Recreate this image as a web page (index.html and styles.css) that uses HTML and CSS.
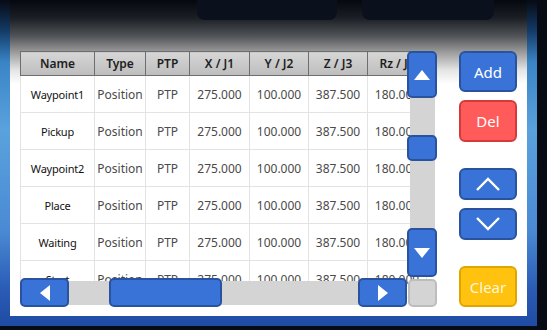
FILE: index.html
```html
<!DOCTYPE html>
<html lang="en">
<head>
    <meta charset="UTF-8">
    <meta name="viewport" content="width=device-width, initial-scale=1.0">
    <title>Waypoints</title>
    <link rel="stylesheet" href="styles.css">
</head>
<body>
    <div class="frame">
        <div class="panel">
            <!-- toolbar tabs (cut off at top) -->
            <div class="topbar">
                <div class="tab tab-one"></div>
                <div class="tab tab-two"></div>
            </div>

            <div class="content">
                <!-- Waypoint table with scrollbars -->
                <div class="grid-view">
                    <table class="points">
                        <thead>
                            <tr>
                                <th class="c-name">Name</th>
                                <th class="c-type">Type</th>
                                <th class="c-ptp">PTP</th>
                                <th class="c-x">X / J1</th>
                                <th class="c-y">Y / J2</th>
                                <th class="c-z">Z / J3</th>
                                <th class="c-rz">Rz / J4</th>
                            </tr>
                        </thead>
                        <tbody>
                            <tr><td class="name">Waypoint1</td><td>Position</td><td>PTP</td><td>275.000</td><td>100.000</td><td>387.500</td><td>180.000</td></tr>
                            <tr><td class="name">Pickup</td><td>Position</td><td>PTP</td><td>275.000</td><td>100.000</td><td>387.500</td><td>180.000</td></tr>
                            <tr><td class="name">Waypoint2</td><td>Position</td><td>PTP</td><td>275.000</td><td>100.000</td><td>387.500</td><td>180.000</td></tr>
                            <tr><td class="name">Place</td><td>Position</td><td>PTP</td><td>275.000</td><td>100.000</td><td>387.500</td><td>180.000</td></tr>
                            <tr><td class="name">Waiting</td><td>Position</td><td>PTP</td><td>275.000</td><td>100.000</td><td>387.500</td><td>180.000</td></tr>
                            <tr><td class="name">Start</td><td>Position</td><td>PTP</td><td>275.000</td><td>100.000</td><td>387.500</td><td>180.000</td></tr>
                        </tbody>
                    </table>

                    <!-- vertical scrollbar -->
                    <div class="vscroll">
                        <div class="sb-btn v-up">
                            <svg width="16" height="10" viewBox="0 0 16 10"><polygon points="8,0 16,10 0,10" fill="#fff"/></svg>
                        </div>
                        <div class="sb-btn v-thumb"></div>
                        <div class="sb-btn v-down">
                            <svg width="16" height="10" viewBox="0 0 16 10"><polygon points="0,0 16,0 8,10" fill="#fff"/></svg>
                        </div>
                    </div>

                    <!-- horizontal scrollbar -->
                    <div class="hscroll">
                        <div class="sb-btn h-left">
                            <svg width="10" height="16" viewBox="0 0 10 16"><polygon points="10,0 10,16 0,8" fill="#fff"/></svg>
                        </div>
                        <div class="sb-btn h-thumb"></div>
                        <div class="sb-btn h-right">
                            <svg width="10" height="16" viewBox="0 0 10 16"><polygon points="0,0 10,8 0,16" fill="#fff"/></svg>
                        </div>
                    </div>

                    <div class="corner"></div>
                </div>

                <!-- Side actions -->
                <div class="side">
                    <button class="btn btn-blue btn-add">Add</button>
                    <button class="btn btn-red btn-del">Del</button>
                    <button class="btn btn-blue btn-move btn-up">
                        <svg width="26" height="14" viewBox="0 0 26 14"><polyline points="2,13 13,2 24,13" fill="none" stroke="#fff" stroke-width="2.4"/></svg>
                    </button>
                    <button class="btn btn-blue btn-move btn-down">
                        <svg width="26" height="14" viewBox="0 0 26 14"><polyline points="2,1 13,12 24,1" fill="none" stroke="#fff" stroke-width="2.4"/></svg>
                    </button>
                    <button class="btn btn-yellow btn-clear">Clear</button>
                </div>
            </div>
        </div>
    </div>
</body>
</html>
```

FILE: styles.css
```css
:root {
    --blue: #3a73d7;
    --blue-edge: #2a539f;
    --red: #ff5b5b;
    --red-edge: #d43a3a;
    --yellow: #ffc20e;
    --yellow-edge: #e0a600;
    --track: #d4d4d4;
}

* {
    margin: 0;
    padding: 0;
    box-sizing: border-box;
}

body {
    background-color: #070b14;
    width: 547px;
    height: 330px;
    overflow: hidden;
    font-family: "Noto Sans", "Open Sans", sans-serif;
}

.frame {
    width: 537px;
    height: 326px;
    padding: 0 10px 10px 10px;
    background: linear-gradient(to bottom, #070b14 0, #123964 30px, #3a84c6 62px, #5aa2dc 130px, #4a8ad4 230px, #2a5bb6 290px, #1f4ba3 326px);
}

.panel {
    height: 316px;
    background: linear-gradient(to bottom, #05080e 0, #1b1e24 18px, #505357 36px, #9a9a9a 52px, #e4e4e4 70px, #ffffff 84px);
}

.topbar {
    display: flex;
    height: 20px;
}

.tab {
    height: 20px;
    background-color: #0a101c;
    border-radius: 0 0 8px 8px;
}

.tab-one {
    width: 140px;
    margin-left: 187px;
}

.tab-two {
    width: 132px;
    margin-left: 25px;
}

.content {
    display: flex;
    margin-top: 31px;
    padding-left: 10px;
}

/* table + scrollbars */
.grid-view {
    position: relative;
    width: 417px;
    height: 256px;
    overflow: hidden;
}

.points {
    border-collapse: collapse;
    table-layout: fixed;
    width: 406px;
    font-size: 12px;
    color: #4a4a4a;
}

.points th {
    height: 24px;
    background: linear-gradient(to bottom, #d6d6d6, #bdbdbd);
    border: 1.5px solid #6e6e6e;
    color: #1e1e1e;
    font-weight: 600;
    font-size: 12px;
    text-align: center;
    white-space: nowrap;
    overflow: hidden;
}

.points td {
    height: 37px;
    border: 1px solid #e3e3e3;
    text-align: center;
    white-space: nowrap;
    overflow: hidden;
    background-color: #fff;
}

.points td.name {
    color: #111;
    font-size: 11px;
    font-weight: 400;
    letter-spacing: -0.2px;
}

.c-name { width: 74px; }
.c-type { width: 51px; }
.c-ptp { width: 44px; }
.c-x { width: 60px; }
.c-y { width: 59px; }
.c-z { width: 59px; }
.c-rz { width: 59px; }

.sb-btn {
    position: absolute;
    background-color: var(--blue);
    border: 2px solid var(--blue-edge);
    border-radius: 5px;
    display: flex;
    align-items: center;
    justify-content: center;
}

.vscroll {
    position: absolute;
    left: 387px;
    top: 0;
    width: 30px;
    height: 227px;
}

.vscroll::before {
    content: "";
    position: absolute;
    left: 3px;
    top: 10px;
    width: 25px;
    height: 210px;
    background-color: var(--track);
}

.v-up {
    left: 0;
    top: 0;
    width: 30px;
    height: 47px;
}

.v-thumb {
    left: 0;
    top: 84px;
    width: 30px;
    height: 26px;
}

.v-down {
    left: 0;
    top: 177px;
    width: 30px;
    height: 49px;
}

.hscroll {
    position: absolute;
    left: 0;
    top: 227px;
    width: 387px;
    height: 29px;
}

.hscroll::before {
    content: "";
    position: absolute;
    left: 10px;
    top: 3px;
    width: 370px;
    height: 24px;
    background-color: var(--track);
}

.h-left {
    left: 0;
    top: 0;
    width: 49px;
    height: 29px;
}

.h-thumb {
    left: 89px;
    top: 0;
    width: 113px;
    height: 29px;
}

.h-right {
    left: 338px;
    top: 0;
    width: 49px;
    height: 29px;
}

.corner {
    position: absolute;
    left: 388px;
    top: 228px;
    width: 29px;
    height: 28px;
    background-color: var(--track);
    border: 2px solid #bdbdbd;
    border-radius: 5px;
}

/* side buttons */
.side {
    display: flex;
    flex-direction: column;
    width: 58px;
    margin-left: 22px;
}

.btn {
    display: flex;
    align-items: center;
    justify-content: center;
    width: 58px;
    border-radius: 6px;
    border: 2px solid var(--blue-edge);
    color: #fff;
    font-family: "Noto Sans", sans-serif;
    font-size: 15px;
}

.btn-blue {
    background-color: var(--blue);
}

.btn-red {
    background-color: var(--red);
    border-color: var(--red-edge);
}

.btn-yellow {
    background-color: var(--yellow);
    border-color: var(--yellow-edge);
    color: #fff6dc;
}

.btn-add {
    height: 41px;
}

.btn-del {
    height: 42px;
    margin-top: 8px;
}

.btn-move {
    height: 32px;
}

.btn-up {
    margin-top: 26px;
}

.btn-down {
    margin-top: 8px;
}

.btn-clear {
    height: 41px;
    margin-top: 26px;
}
```
